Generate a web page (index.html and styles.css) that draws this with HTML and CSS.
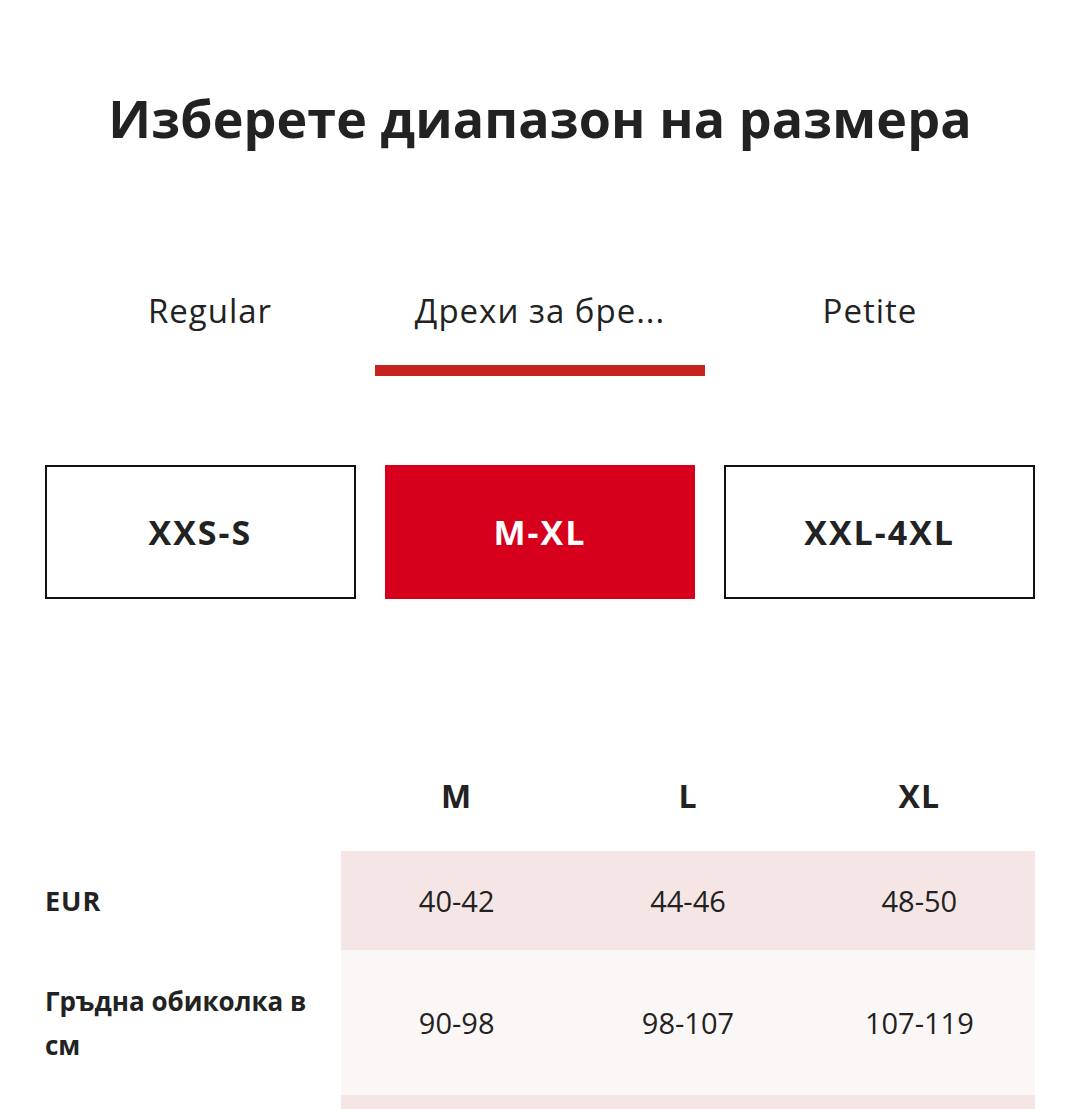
FILE: index.html
```html
<!DOCTYPE html>
<html lang="bg">
<head>
<meta charset="utf-8">
<title>Размери</title>
<link rel="stylesheet" href="styles.css">
</head>
<body>
<main class="page">
  <h1 class="title">Изберете диапазон на размера</h1>

  <nav class="tabs">
    <div class="tab">Regular</div>
    <div class="tab tab-active">Дрехи за бре...</div>
    <div class="tab">Petite</div>
  </nav>

  <div class="ranges">
    <button class="range">XXS-S</button>
    <button class="range range-active">M-XL</button>
    <button class="range">XXL-4XL</button>
  </div>

  <div class="chart">
    <div class="cell head-blank"></div>
    <div class="cell head">M</div>
    <div class="cell head">L</div>
    <div class="cell head">XL</div>

    <div class="cell label row-a">EUR</div>
    <div class="cell value row-a pink">40-42</div>
    <div class="cell value row-a pink">44-46</div>
    <div class="cell value row-a pink">48-50</div>

    <div class="cell label row-b">Гръдна обиколка в см</div>
    <div class="cell value row-b light">90-98</div>
    <div class="cell value row-b light">98-107</div>
    <div class="cell value row-b light">107-119</div>

    <div class="cell label row-c"></div>
    <div class="cell value row-c pink"></div>
    <div class="cell value row-c pink"></div>
    <div class="cell value row-c pink"></div>
  </div>
</main>
</body>
</html>
```

FILE: styles.css
```css
* { box-sizing: border-box; }
html, body { margin: 0; padding: 0; background: #fff; }
body {
  font-family: "Open Sans", "Noto Sans", "DejaVu Sans", sans-serif;
  color: #222;
}
.page { padding: 0 45px; }

.title {
  margin: 88px 0 0;
  font-size: 52px;
  line-height: 60px;
  font-weight: 700;
  text-align: center;
  color: #222;
  letter-spacing: 0.1px;
}

.tabs {
  display: grid;
  grid-template-columns: repeat(3, 1fr);
  margin-top: 143px;
}
.tab {
  font-size: 33px;
  line-height: 40px;
  letter-spacing: 1px;
  text-align: center;
  padding-bottom: 34px;
  border-bottom: 11px solid transparent;
  color: #222;
}
.tab-active { border-bottom-color: #c8221f; }

.ranges {
  display: grid;
  grid-template-columns: repeat(3, 1fr);
  gap: 29px;
  margin-top: 89px;
}
.range {
  height: 134px;
  border: 2px solid #111;
  background: #fff;
  font-family: inherit;
  font-size: 34px;
  font-weight: 700;
  letter-spacing: 2px;
  color: #222;
  padding: 0;
}
.range-active {
  background: #d6001c;
  border-color: #d6001c;
  color: #fff;
}

.chart {
  display: grid;
  grid-template-columns: 296px repeat(3, 1fr);
  margin-top: 146px;
}
.cell {
  display: flex;
  align-items: center;
}
.head {
  height: 106px;
  justify-content: center;
  align-items: flex-start;
  font-size: 32px;
  font-weight: 700;
  line-height: 40px;
  letter-spacing: 1px;
  padding-top: 31px;
}
.label {
  font-size: 26px;
  font-weight: 700;
  line-height: 44px;
  padding-right: 20px;
}
.label.row-a { font-size: 27px; letter-spacing: 1px; }
.value {
  justify-content: center;
  font-size: 29px;
  letter-spacing: 0;
}
.row-a { height: 99px; }
.row-b { height: 145px; }
.row-c { height: 99px; }
.pink { background: #f5e5e5; }
.light { background: #faf7f6; }
```
